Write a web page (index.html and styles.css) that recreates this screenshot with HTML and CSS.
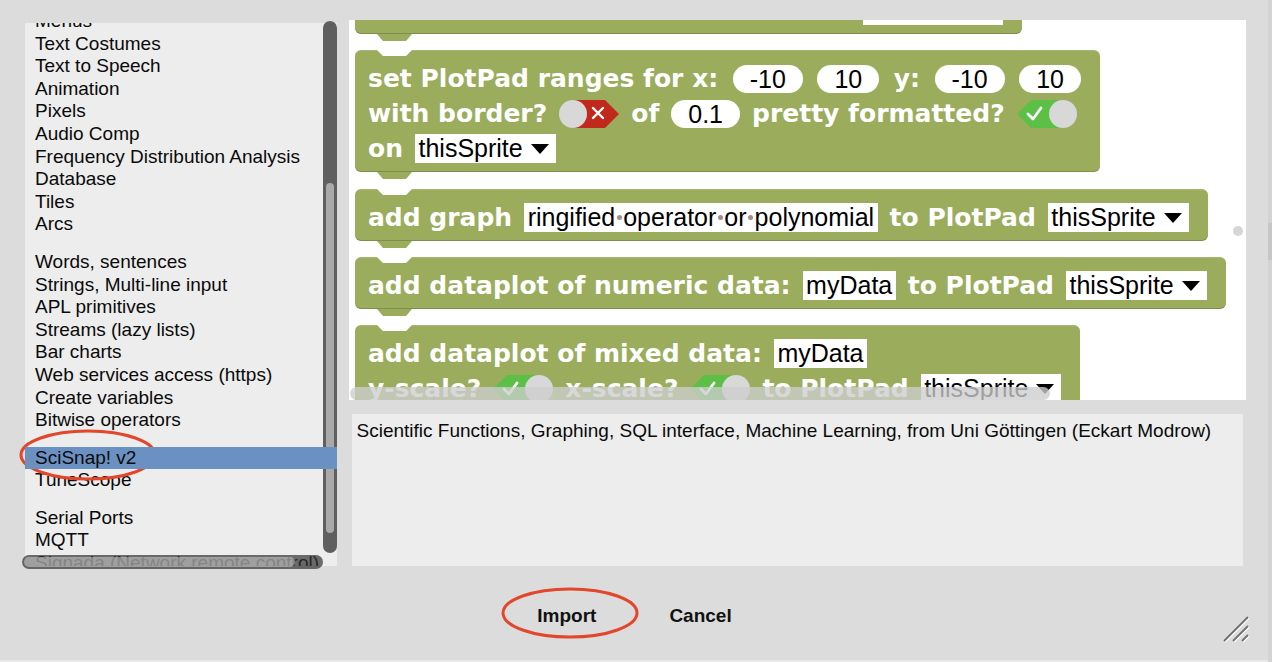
FILE: index.html
```html
<!DOCTYPE html>
<html>
<head>
<meta charset="utf-8">
<title>Import library</title>
<link rel="stylesheet" href="styles.css">
</head>
<body>
<div class="dialog">
  <div class="main">
    <div class="left">
      <div class="list">
        <div class="items">
          <div class="item">Menus</div>
          <div class="item">Text Costumes</div>
          <div class="item">Text to Speech</div>
          <div class="item">Animation</div>
          <div class="item">Pixels</div>
          <div class="item">Audio Comp</div>
          <div class="item">Frequency Distribution Analysis</div>
          <div class="item">Database</div>
          <div class="item">Tiles</div>
          <div class="item">Arcs</div>
          <div class="sep"></div>
          <div class="item">Words, sentences</div>
          <div class="item">Strings, Multi-line input</div>
          <div class="item">APL primitives</div>
          <div class="item">Streams (lazy lists)</div>
          <div class="item">Bar charts</div>
          <div class="item">Web services access (https)</div>
          <div class="item">Create variables</div>
          <div class="item">Bitwise operators</div>
          <div class="sep"></div>
          <div class="item selected">SciSnap! v2</div>
          <div class="item">TuneScope</div>
          <div class="sep"></div>
          <div class="item">Serial Ports</div>
          <div class="item">MQTT</div>
          <div class="item">Signada (Network remote control)</div>
        </div>
      </div>
      <div class="vbar"><div class="vthumb"></div></div>
      <div class="hbar"><div class="hthumb"></div></div>
    </div>

    <div class="right">
      <div class="preview">
        <div class="blocks">
          <div class="block b0">
            <div class="row"><span class="lbl">show PlotPad axes and labels</span><span class="slot wide">&nbsp;</span></div>
          </div>

          <div class="block b1">
            <div class="row wide-gap">
              <span class="lbl">set PlotPad ranges for x:</span>
              <span class="num">-10</span>
              <span class="num">10</span>
              <span class="lbl">y:</span>
              <span class="num">-10</span>
              <span class="num">10</span>
            </div>
            <div class="row">
              <span class="lbl">with border?</span>
              <svg class="tog" width="60" height="28" viewBox="0 0 60 28"><polygon points="13,0 46,0 60,14 46,28 13,28 0,14" fill="#c2291d"/><circle cx="14" cy="14" r="14" fill="#d8d8d8"/><path d="M34 8 L44 18 M44 8 L34 18" stroke="#fff" stroke-width="2.4" stroke-linecap="round"/></svg>
              <span class="lbl">of</span>
              <span class="num">0.1</span>
              <span class="lbl">pretty formatted?</span>
              <svg class="tog" width="60" height="28" viewBox="0 0 60 28"><polygon points="0,14 14,0 47,0 60,14 47,28 14,28" fill="#5cbf46"/><circle cx="46" cy="14" r="14" fill="#d8d8d8"/><path d="M11 14 L16 19 L24 8" stroke="#fff" stroke-width="2.8" fill="none" stroke-linecap="round" stroke-linejoin="round"/></svg>
            </div>
            <div class="row">
              <span class="lbl">on</span>
              <span class="drop">thisSprite<svg class="arr" width="18" height="10" viewBox="0 0 18 10"><polygon points="0,0 18,0 9,10" fill="#000"/></svg></span>
            </div>
          </div>

          <div class="block">
            <div class="row">
              <span class="lbl">add graph</span>
              <span class="slot">ringified<i class="sp"></i>operator<i class="sp"></i>or<i class="sp"></i>polynomial</span>
              <span class="lbl">to PlotPad</span>
              <span class="drop">thisSprite<svg class="arr" width="18" height="10" viewBox="0 0 18 10"><polygon points="0,0 18,0 9,10" fill="#000"/></svg></span>
            </div>
          </div>

          <div class="block">
            <div class="row">
              <span class="lbl">add dataplot of numeric data:</span>
              <span class="slot">myData</span>
              <span class="lbl">to PlotPad</span>
              <span class="drop">thisSprite<svg class="arr" width="18" height="10" viewBox="0 0 18 10"><polygon points="0,0 18,0 9,10" fill="#000"/></svg></span>
            </div>
          </div>

          <div class="block">
            <div class="row">
              <span class="lbl">add dataplot of mixed data:</span>
              <span class="slot">myData</span>
            </div>
            <div class="row">
              <span class="lbl">y-scale?</span>
              <svg class="tog" width="60" height="28" viewBox="0 0 60 28"><polygon points="0,14 14,0 47,0 60,14 47,28 14,28" fill="#5cbf46"/><circle cx="46" cy="14" r="14" fill="#d8d8d8"/><path d="M11 14 L16 19 L24 8" stroke="#fff" stroke-width="2.8" fill="none" stroke-linecap="round" stroke-linejoin="round"/></svg>
              <span class="lbl">x-scale?</span>
              <svg class="tog" width="60" height="28" viewBox="0 0 60 28"><polygon points="0,14 14,0 47,0 60,14 47,28 14,28" fill="#5cbf46"/><circle cx="46" cy="14" r="14" fill="#d8d8d8"/><path d="M11 14 L16 19 L24 8" stroke="#fff" stroke-width="2.8" fill="none" stroke-linecap="round" stroke-linejoin="round"/></svg>
              <span class="lbl">to PlotPad</span>
              <span class="drop">thisSprite<svg class="arr" width="18" height="10" viewBox="0 0 18 10"><polygon points="0,0 18,0 9,10" fill="#000"/></svg></span>
            </div>
          </div>
        </div>
        <div class="dot"></div>
        <div class="pbar"></div>
      </div>
      <div class="desc">Scientific Functions, Graphing, SQL interface, Machine Learning, from Uni Göttingen (Eckart Modrow)</div>
    </div>
  </div>

  <div class="footer">
    <span class="btn">Import</span>
    <span class="btn">Cancel</span>
  </div>

  <svg class="ring ring-list" width="140" height="54" viewBox="0 0 140 54"><ellipse cx="70" cy="27" rx="67" ry="24" fill="none" stroke="#e2462b" stroke-width="3"/></svg>
  <svg class="ring ring-import" width="140" height="54" viewBox="0 0 140 54"><ellipse cx="70" cy="27" rx="67" ry="24" fill="none" stroke="#e2462b" stroke-width="3"/></svg>
  <svg class="grip" width="28" height="28" viewBox="0 0 28 28">
    <path d="M2 26 L26 2 M11 26 L26 11 M20 26 L26 20" stroke="#ffffff" stroke-width="1.6"/>
    <path d="M1 25 L25 1 M10 25 L25 10 M19 25 L25 19" stroke="#707070" stroke-width="1.8"/>
  </svg>
</div>
<div class="edge"><div class="edge-mark"></div></div>
</body>
</html>
```

FILE: styles.css
```css
* { box-sizing: border-box; }
html, body { margin: 0; padding: 0; }
body {
  width: 1272px;
  height: 662px;
  overflow: hidden;
  display: flex;
  background: #d3d3d3;
  font-family: "Liberation Sans", Arial, sans-serif;
}
.dialog {
  position: relative;
  width: 1268px;
  height: 662px;
  background: #dcdcdc;
  display: flex;
  flex-direction: column;
  border-bottom: 2px solid #e8e8e8;
}
.edge { flex: 1; display: flex; flex-direction: column; }
.edge-mark { margin-top: 223px; height: 37px; background: #c6c6c6; }

.main { display: flex; padding-top: 20px; height: 569px; }

/* library list */
.left { position: relative; margin-left: 22px; width: 316px; padding-top: 1px; }
.list {
  margin: 2px 0 0 3px;
  width: 312px;
  height: 543px;
  background: #ededed;
  overflow: hidden;
}
.items {
  margin-top: -13px;
  font-size: 19px;
  line-height: 22.6px;
  color: #0a0a0a;
  white-space: nowrap;
}
.item { padding-left: 10px; }
.sep { height: 15px; }
.selected { position: relative; z-index: 3; background: #6b91c3; }
.vbar {
  position: absolute; left: 301px; top: 1px;
  width: 14px; height: 532px;
  background: #5f5f5f; border-radius: 7px;
}
.vthumb {
  position: absolute; left: 3px; top: 162px;
  width: 8px; height: 350px;
  background: #a9a9a9; border-radius: 4px;
}
.hbar {
  position: absolute; left: 0; top: 535px;
  width: 301px; height: 14px;
  background: rgba(50, 50, 50, 0.7); border-radius: 7px;
}
.hthumb {
  position: absolute; left: 2px; top: 2px;
  width: 271px; height: 10px;
  background: rgba(195, 195, 195, 0.6); border-radius: 5px;
}

/* right column */
.right { margin-left: 11px; width: 897px; display: flex; flex-direction: column; }
.preview { position: relative; height: 380px; background: #fff; overflow: hidden; }
.blocks {
  display: flex; flex-direction: column; align-items: flex-start;
  gap: 16px; padding-left: 6px;
}
.block {
  position: relative;
  background: #9bac5d;
  border-radius: 6px;
  padding: 11px 19px 6px 13px;
  box-shadow: inset 0 -1px 0 rgba(0, 0, 0, 0.18), inset 0 1px 0 rgba(255, 255, 255, 0.12);
}
.block::before {
  content: "";
  position: absolute; top: 0; left: 22px;
  width: 35px; height: 6px;
  background: #fff;
  clip-path: polygon(0 0, 100% 0, 83% 100%, 17% 100%);
}
.block::after {
  content: "";
  position: absolute; top: 100%; left: 22px;
  width: 35px; height: 7px;
  background: #9bac5d;
  clip-path: polygon(0 0, 100% 0, 83% 100%, 17% 100%);
}
.b0 { width: 667px; margin-top: -38px; }
.b0 .lbl { flex: 1; overflow: hidden; white-space: nowrap; }
.b1 { margin-bottom: 1px; }
.row { display: flex; align-items: center; gap: 12px; height: 35px; }
.row.wide-gap { gap: 14.5px; }
.lbl {
  font-family: "DejaVu Sans", sans-serif;
  font-weight: bold;
  font-size: 25px;
  color: #fff;
  white-space: nowrap;
}
.num {
  height: 28px; line-height: 28px;
  padding: 0 17px;
  background: #fff; border-radius: 14px;
  font-size: 25px; color: #000;
}
.slot {
  height: 29px; line-height: 29px;
  padding: 0 3.5px;
  background: #fff; color: #000;
  font-size: 25px; white-space: nowrap;
  display: inline-flex; align-items: center;
}
.slot.wide { width: 140px; }
.sp {
  display: inline-block; width: 5px; height: 5px;
  margin: 0 1.5px; border-radius: 50%;
  background: #a88a8a;
}
.drop {
  height: 29px; line-height: 29px;
  padding: 0 7px 0 3.5px;
  background: #fff; color: #000;
  font-size: 25px; white-space: nowrap;
  display: inline-flex; align-items: center;
}
.arr { margin-left: 8px; }
.tog { flex: none; display: block; }
.dot {
  position: absolute; left: 884px; top: 206px;
  width: 10px; height: 10px; border-radius: 50%;
  background: #d6d6d6;
}
.pbar {
  position: absolute; left: 1px; bottom: 0;
  width: 700px; height: 13px;
  background: rgba(205, 205, 205, 0.78); border-radius: 7px;
}
.desc {
  margin: 14px 3px 0;
  height: 152px;
  background: #ededed;
  padding: 6px 4px 0 4.5px;
  font-size: 19px; line-height: 22px;
  color: #0a0a0a;
}

/* footer */
.footer {
  flex: 1;
  display: flex; justify-content: center; align-items: center;
  gap: 73px; padding-left: 1px; padding-top: 2px;
}
.btn { font-weight: bold; font-size: 19px; color: #111; }

/* annotations */
.ring { position: absolute; }
.ring-list { left: 18px; top: 428px; }
.ring-import { left: 500px; top: 586px; }
.grip { position: absolute; left: 1223px; top: 616px; }
```
